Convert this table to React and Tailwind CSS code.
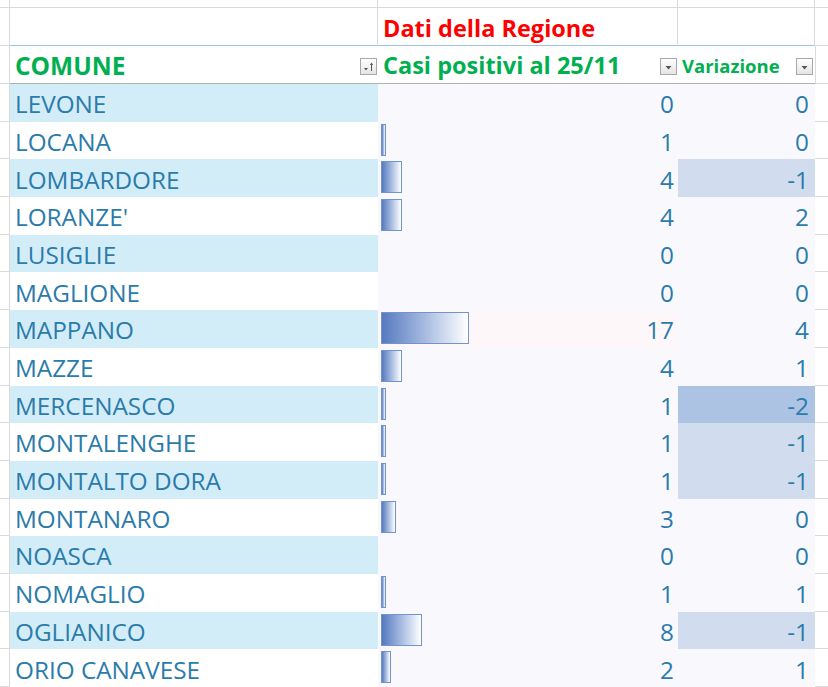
import React from "react";

const rows = [
  ["LEVONE", 0, 0],
  ["LOCANA", 1, 0],
  ["LOMBARDORE", 4, -1],
  ["LORANZE'", 4, 2],
  ["LUSIGLIE", 0, 0],
  ["MAGLIONE", 0, 0],
  ["MAPPANO", 17, 4],
  ["MAZZE", 4, 1],
  ["MERCENASCO", 1, -2],
  ["MONTALENGHE", 1, -1],
  ["MONTALTO DORA", 1, -1],
  ["MONTANARO", 3, 0],
  ["NOASCA", 0, 0],
  ["NOMAGLIO", 1, 1],
  ["OGLIANICO", 8, -1],
  ["ORIO CANAVESE", 2, 1],
];

function FilterButton({ sort }) {
  const id = sort ? "fbg1" : "fbg2";
  return (
    <svg width="17" height="17" viewBox="0 0 17 17" className="shrink-0">
      <defs>
        <linearGradient id={id} x1="0" y1="0" x2="0" y2="1">
          <stop offset="0" stopColor="#ffffff" />
          <stop offset="1" stopColor="#e4e4e4" />
        </linearGradient>
      </defs>
      <rect x="0.5" y="0.5" width="16" height="16" fill={`url(#${id})`} stroke="#a9a9a9" />
      {sort ? (
        <>
          <path d="M4 10 L8 10 L6 12.5 Z" fill="#555" />
          <path d="M11.5 13 L11.5 5.5" stroke="#555" strokeWidth="1" />
          <path d="M9.9 7 L11.5 4.6 L13.1 7 Z" fill="#555" />
        </>
      ) : (
        <path d="M5.5 8 L11.5 8 L8.5 11.5 Z" fill="#555" />
      )}
    </svg>
  );
}

function Bar({ value }) {
  if (!value) return <div />;
  return (
    <div
      className="self-start mt-[2px] ml-[3px] h-[32px] border border-[#7393cb] bg-gradient-to-r from-[#5679bf] to-[#ffffff]"
      style={{ width: `${value * 5.15}px` }}
    />
  );
}

export default function App() {
  const grid = "border-[#dadada]";
  return (
    <div className="w-[828px] h-[687px] overflow-hidden bg-white font-['Open_Sans',sans-serif] text-[#2b7bab]">
      {/* row 0 */}
      <div className="flex h-[8px]">
        <div className={`w-[10px] border-r border-b ${grid}`} />
        <div className={`w-[368px] border-r border-b ${grid}`} />
        <div className={`w-[300px] border-r border-b ${grid}`} />
        <div className={`w-[137px] border-r border-b ${grid}`} />
        <div className={`w-[13px] border-b ${grid}`} />
      </div>
      {/* Dati della Regione row */}
      <div className="flex h-[38px]">
        <div className={`w-[10px] border-r border-b ${grid}`} />
        <div className={`w-[368px] border-r ${grid} border-b border-b-[#9dc3e6]`} />
        <div className={`w-[300px] border-r ${grid} border-b border-b-[#9dc3e6] flex items-center pl-[5px] pt-[5px]`}>
          <span className="text-[#ff0000] font-bold text-[23.5px] leading-none">Dati della Regione</span>
        </div>
        <div className={`w-[137px] border-r ${grid} border-b border-b-[#9dc3e6]`} />
        <div className={`w-[13px] border-b ${grid}`} />
      </div>
      {/* Header row */}
      <div className="flex h-[38px]">
        <div className={`w-[10px] border-r border-b ${grid}`} />
        <div className="w-[368px] border-b border-[#b2b2b2] flex items-center justify-between pl-[5px] pr-[1px] pt-[3px]">
          <span className="text-[#00b050] font-bold text-[24.5px] leading-none">COMUNE</span>
          <FilterButton sort />
        </div>
        <div className="w-[300px] border-b border-[#b2b2b2] flex items-center justify-between pl-[5px] pr-[1px] pt-[3px]">
          <span className="text-[#00b050] font-bold text-[23.5px] leading-none">Casi positivi al 25/11</span>
          <FilterButton />
        </div>
        <div className="w-[137px] border-b border-[#b2b2b2] flex items-center justify-between pl-[4px] pr-[2px] pt-[3px]">
          <span className="text-[#00b050] font-bold text-[18.5px] leading-none">Variazione</span>
          <FilterButton />
        </div>
        <div className={`w-[13px] border-l border-b ${grid}`} />
      </div>
      {/* Data rows */}
      {rows.map(([name, casi, varz], i) => {
        const band = i % 2 === 0;
        const varBg =
          varz === -2 ? "bg-[#adc3e4]" : varz === -1 ? "bg-[#d1ddef]" : "bg-[#f9f9fd]";
        const casiBg = casi === 17 ? "bg-[#fdf7f9]" : "bg-[#f9f9fd]";
        return (
          <div key={name} className="flex h-[37.7px]">
            <div className={`w-[10px] border-r border-b ${grid}`} />
            <div className={`w-[368px] flex items-center pl-[5px] pt-[3px] text-[24.3px] leading-none ${band ? "bg-[#d3edf8]" : "bg-white"}`}>
              {name}
            </div>
            <div className={`w-[300px] flex items-center justify-between pr-[4px] text-[24.3px] leading-none ${casiBg}`}>
              <Bar value={casi} />
              <span className="pt-[3px]">{casi}</span>
            </div>
            <div className={`w-[137px] flex items-center justify-end pr-[6px] pt-[3px] text-[24.3px] leading-none ${varBg}`}>
              {varz}
            </div>
            <div className={`w-[13px] border-b ${grid}`} />
          </div>
        );
      })}
    </div>
  );
}
